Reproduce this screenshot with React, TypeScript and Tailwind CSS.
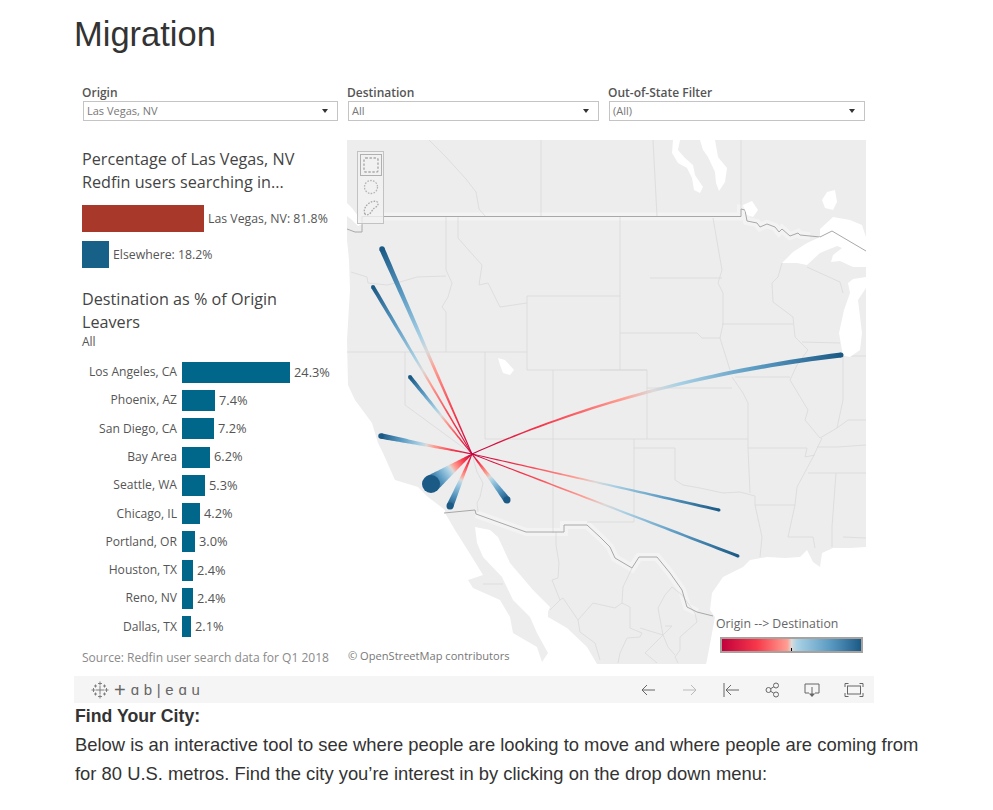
const tableauFont = "font-['Open_Sans',sans-serif]";

const destinations = [
  { name: "Los Angeles, CA", pct: "24.3%", width: 108 },
  { name: "Phoenix, AZ", pct: "7.4%", width: 33 },
  { name: "San Diego, CA", pct: "7.2%", width: 32 },
  { name: "Bay Area", pct: "6.2%", width: 28 },
  { name: "Seattle, WA", pct: "5.3%", width: 23 },
  { name: "Chicago, IL", pct: "4.2%", width: 18 },
  { name: "Portland, OR", pct: "3.0%", width: 13 },
  { name: "Houston, TX", pct: "2.4%", width: 11 },
  { name: "Reno, NV", pct: "2.4%", width: 11 },
  { name: "Dallas, TX", pct: "2.1%", width: 9 },
];

// Everything below is in page coordinates; the svg viewBox starts at the map's corner.
const LAND =
  "347,140 866,140 866,547 850,548 833,548 822,553 820,567 813,562 807,550 800,557 785,558 767,557 750,560 743,567 723,577 712,593 710,610 715,617 707,660 706,664 597,664 587,647 567,628 548,617 548,612 550,607 533,590 510,563 498,537 490,530 475,527 477,543 483,557 502,577 513,600 530,617 537,633 548,653 542,662 537,647 513,633 510,617 500,600 473,588 468,580 483,575 472,557 455,530 445,513 445,510 428,497 418,487 395,480 383,453 378,443 372,423 355,400 348,385 347,340 350,290 349,260 347,240";

const WATER = [
  "673,140 680,140 678,150 685,158 693,165 695,175 703,187 700,193 694,190 692,178 687,168 678,163 672,153",
  "700,140 715,140 718,157 727,168 725,182 719,191 716,183 715,172 708,157 703,150",
  "743,205 752,201 758,210 753,217 747,215",
  "827,192 835,190 837,202 833,210 825,208 822,200",
  "782,263 793,252 807,243 820,237 820,229 833,217 850,220 862,225 866,237 866,267 853,267 840,261 831,262 833,255 842,248 837,246 820,253 807,265 797,263",
  "848,283 853,279 866,277 866,288 858,300 862,333 860,350 850,357 843,356 839,333 844,310 850,293",
  "498,358 505,360 514,370 510,375 503,373 500,365",
  "347,203 352,208 358,216 362,224 358,226 352,220 347,216",
];

const STATE_LINES = [
  "429,140 445,156 466,179 476,192 479,209 486,217",
  "541,140 541,216",
  "653,140 657,216",
  "741,140 741,209",
  "446,217 446,270 452,283 448,297 442,307 446,312 446,352",
  "351,272 367,277 368,283 387,285 400,282 417,277 446,276",
  "347,352 527,352",
  "458,217 458,238 473,255 482,265 479,285 488,283 500,307 527,303",
  "527,296 620,296",
  "620,216 620,370",
  "527,296 527,370 647,370 647,439",
  "553,370 553,533",
  "485,352 485,439",
  "405,352 405,405 472,454 477,472 483,483 480,497 477,503 478,512",
  "485,439 748,439",
  "600,370 647,370",
  "647,388 732,388",
  "732,377 743,393 748,403 748,448",
  "634,439 634,522 587,522",
  "634,448 675,448 675,480 683,485 700,488 723,493 740,492 755,496 755,505",
  "748,448 750,493",
  "748,448 807,448 805,457 815,455",
  "755,505 795,505",
  "822,438 813,457 797,487 795,505 788,537 813,537 815,548",
  "836,473 832,527 832,547",
  "808,473 866,473",
  "817,447 837,447 866,445",
  "843,537 866,538",
  "755,505 762,537 760,557",
  "843,356 843,400 837,428 820,438",
  "837,428 848,420 866,420",
  "735,377 790,377",
  "782,263 778,277 772,283 773,302 793,317 795,337 808,350 797,365 790,380 808,410 805,420 820,438",
  "722,324 793,324",
  "713,218 718,247 722,270 718,283 723,293 723,324 720,338 730,370",
  "650,278 722,278",
  "620,333 697,333 702,338 720,338",
  "807,267 820,273 840,282 843,293",
  "802,342 840,343",
  "843,356 866,356",
  "556,532 556,545 559,563 558,578 552,580 560,600 550,610",
  "560,600 563,598 578,620 580,632 595,643 600,660",
  "578,620 593,603 615,608 622,603 630,607 630,628 642,633 640,637 627,638 620,653 618,663",
  "622,603 623,587 632,568",
  "640,628 663,635 645,653 657,663",
  "663,635 658,608 665,595 672,587 682,595 695,613 697,622 680,637 680,650 675,657 678,663",
  "665,626 672,626 663,635 668,647 675,655",
  "483,584 503,584",
];

const BORDER_HALOS = [
  "362,216.5 741,216.5 741,209 745,210 747,221 757,223 760,227 767,224 775,227 779,232 782,229 790,236 798,233 800,235 810,236",
  "476,514 526,532 564,532 564,525 587,525 600,537 610,547 615,558 632,568 639,557 657,557 670,573 682,590 687,607 697,612",
];

const BORDERS = [
  "347,229 355,232 362,232 362,223 362,216.5 741,216.5 741,209 745,210 747,221 757,223 760,227 767,224 775,227 779,232 782,229 790,236 798,233 800,235 810,236 820,237 832,231 866,251",
  "444,513 475,510 476,514 526,532 564,532 564,525 587,525 600,537 610,547 615,558 632,568 639,557 657,557 670,573 682,590 687,607 697,612 713,616",
];

const ORIGIN = { x: 472, y: 454 };

const ARCS = [
  { id: "seattle", x: 382, y: 249, w: 5.5 },
  { id: "portland", x: 373, y: 287, w: 4 },
  { id: "reno", x: 410, y: 377, w: 4 },
  { id: "bay", x: 381, y: 436, w: 5.5 },
  { id: "la", x: 431, y: 484, w: 18 },
  { id: "sandiego", x: 450, y: 506, w: 7 },
  { id: "phoenix", x: 507, y: 500, w: 7 },
  { id: "dallas", x: 719, y: 510, w: 3 },
  { id: "houston", x: 738, y: 556, w: 3 },
  { id: "chicago", x: 841, y: 355, w: 5, cx: 637, cy: 380 },
];

// Builds a ribbon that swells from the origin point to the destination.
function ribbon(x: number, y: number, w: number, cx?: number, cy?: number) {
  const c = { x: cx ?? (ORIGIN.x + x) / 2, y: cy ?? (ORIGIN.y + y) / 2 };
  const left: string[] = [];
  const right: string[] = [];
  for (let i = 0; i <= 40; i++) {
    const t = i / 40;
    const px = (1 - t) * (1 - t) * ORIGIN.x + 2 * t * (1 - t) * c.x + t * t * x;
    const py = (1 - t) * (1 - t) * ORIGIN.y + 2 * t * (1 - t) * c.y + t * t * y;
    const dx = 2 * (1 - t) * (c.x - ORIGIN.x) + 2 * t * (x - c.x);
    const dy = 2 * (1 - t) * (c.y - ORIGIN.y) + 2 * t * (y - c.y);
    const len = Math.hypot(dx, dy);
    const half = (0.9 + (w - 0.9) * t) / 2;
    left.push(`${px - (dy / len) * half},${py + (dx / len) * half}`);
    right.unshift(`${px + (dy / len) * half},${py - (dx / len) * half}`);
  }
  return `M${left.join(" L")} L${right.join(" L")} Z`;
}

function Filter({ label, value, className }: { label: string; value: string; className: string }) {
  return (
    <div className={className}>
      <div className="h-[16px] text-[12px] leading-[16px] font-semibold text-[#555]">{label}</div>
      <div className="ml-px flex h-[20px] items-center justify-between border border-[#c4c4c4] bg-white pl-[3px] pr-[8px]">
        <span className="pb-px text-[11px] leading-none text-[#777]">{value}</span>
        <span className="mr-px h-0 w-0 border-x-[3.5px] border-t-[4px] border-x-transparent border-t-[#333]" />
      </div>
    </div>
  );
}

function SelectionTools() {
  return (
    <div className="absolute left-[10px] top-[11px] flex h-[73px] w-[27px] flex-col items-center border border-[#c2c2c2] bg-[#f1f1f1]/80 pt-[2px]">
      <div className="flex h-[22px] w-[22px] items-center justify-center border border-[#b0b0b0]">
        <svg width="18" height="18" viewBox="0 0 18 18" fill="none" stroke="#a8a8a8" strokeWidth="1.4" strokeDasharray="2.4 1.6">
          <rect x="2" y="2" width="14" height="14" rx="1.5" />
        </svg>
      </div>
      <svg className="mt-[2px]" width="18" height="18" viewBox="0 0 18 18" fill="none" stroke="#b4b4b4" strokeWidth="1.3" strokeDasharray="1.6 1.3">
        <circle cx="9" cy="9" r="6.5" />
      </svg>
      <svg className="mt-[3px]" width="18" height="18" viewBox="0 0 18 18" fill="none" stroke="#a8a8a8" strokeWidth="1.3" strokeDasharray="1.6 1.3">
        <path d="M3 15c-1.5-2.5-.5-6 1.5-8.5C7 3.5 11 1.5 14.5 2.5c2.5 1 1.8 4-.5 5.5-2 1.3-3 2-4.5 4.5-1.3 2.5-4.5 4.5-6.5 2.5z" />
      </svg>
    </div>
  );
}

function USMap() {
  return (
    <svg className="absolute inset-0" width="519" height="524" viewBox="347 140 519 524">
      <defs>
        {ARCS.map((a) => (
          <linearGradient key={a.id} id={`grad-${a.id}`} gradientUnits="userSpaceOnUse" x1={ORIGIN.x} y1={ORIGIN.y} x2={a.x} y2={a.y}>
            <stop offset="0" stopColor="#c2003d" />
            <stop offset="0.2" stopColor="#f7384a" />
            <stop offset="0.42" stopColor="#ff9e92" />
            <stop offset="0.5" stopColor="#dcd9d8" />
            <stop offset="0.57" stopColor="#a9d1e5" />
            <stop offset="0.78" stopColor="#5a9ac2" />
            <stop offset="1" stopColor="#1c5a86" />
          </linearGradient>
        ))}
      </defs>
      <polygon points={LAND} fill="#ededed" />
      {BORDER_HALOS.map((p) => (
        <polyline key={p} points={p} fill="none" stroke="#f3f3f3" strokeWidth="8" />
      ))}
      {STATE_LINES.map((p) => (
        <polyline key={p} points={p} fill="none" stroke="#d9d9d9" strokeWidth="0.8" />
      ))}
      {BORDERS.map((p) => (
        <polyline key={p} points={p} fill="none" stroke="#a8a8a8" strokeWidth="1" />
      ))}
      {WATER.map((p) => (
        <polygon key={p} points={p} fill="#ffffff" />
      ))}
      <polyline points="820,237 832,231 866,251" fill="none" stroke="#a8a8a8" strokeWidth="1" />
      {ARCS.map((a) => (
        <g key={a.id}>
          <path d={ribbon(a.x, a.y, a.w, a.cx, a.cy)} fill={`url(#grad-${a.id})`} />
          <circle cx={a.x} cy={a.y} r={a.w / 2} fill="#1c5a86" />
        </g>
      ))}
    </svg>
  );
}

function TableauMark() {
  const bars: [number, number, number][] = [
    [9, 9, 4],
    [9, 2.5, 2],
    [9, 15.5, 2],
    [2.5, 9, 2],
    [15.5, 9, 2],
    [4.5, 5, 1.5],
    [13.5, 5, 1.5],
    [4.5, 13, 1.5],
    [13.5, 13, 1.5],
  ];
  return (
    <svg width="18" height="18" viewBox="0 0 18 18" stroke="#777" strokeWidth="0.9">
      {bars.map(([x, y, r]) => (
        <path key={`${x}-${y}`} d={`M${x - r} ${y}H${x + r}M${x} ${y - r}V${y + r}`} />
      ))}
    </svg>
  );
}

function ToolbarIcon({ className, stroke = "#666", children }: { className: string; stroke?: string; children: React.ReactNode }) {
  return (
    <svg className={className} width="20" height="18" viewBox="0 0 20 18" fill="none" stroke={stroke} strokeWidth="1">
      {children}
    </svg>
  );
}

function TableauBar() {
  return (
    <div className="flex h-[27px] items-center bg-[#f5f5f5]">
      <div className="ml-[17px] flex items-center">
        <TableauMark />
        <span className="ml-[5px] flex items-center font-['Liberation_Sans',sans-serif] leading-none text-[#666]">
          <span className="mr-[5px] text-[20px]">+</span>
          <span className="text-[15px] tracking-[4.7px]">ɑb|eɑu</span>
        </span>
      </div>
      <div className="ml-auto mr-[10px] flex items-center">
        <ToolbarIcon className="mr-[22px]">
          <path d="M17 9H4M9 4 4 9l5 5" />
        </ToolbarIcon>
        <ToolbarIcon className="mr-[21px]" stroke="#bbb">
          <path d="M3 9h13M11 4l5 5-5 5" />
        </ToolbarIcon>
        <ToolbarIcon className="mr-[22px]">
          <path d="M3 2v14M18 9H5M10 4 5 9l5 5" />
        </ToolbarIcon>
        <ToolbarIcon className="mr-[19px]">
          <circle cx="5.5" cy="9" r="2.5" />
          <circle cx="13" cy="4.5" r="2.5" />
          <circle cx="13" cy="13.5" r="2.5" />
          <path d="m7.7 7.7 3.1-1.9M7.7 10.3l3.1 1.9" />
        </ToolbarIcon>
        <ToolbarIcon className="mr-[22px]">
          <path d="M7 12H3V3h14v9h-4M10 6v8" />
          <path d="M6.8 12.5h6.4L10 16z" fill="#666" stroke="none" />
        </ToolbarIcon>
        <ToolbarIcon className="">
          <path d="M1 6V2.5h3.5M15.5 2.5H19V6M1 12v3.5h3.5M15.5 15.5H19V12" />
          <rect x="3.5" y="5" width="13" height="8" />
        </ToolbarIcon>
      </div>
    </div>
  );
}

export default function App() {
  return (
    <div className="h-[810px] w-[993px] overflow-hidden bg-white font-['Liberation_Sans',sans-serif] text-[#333]">
      <div className="pl-[75px]">
        <h1 className="-ml-px h-[85px] pt-[14px] text-[34.5px] leading-[40px] text-[#333]">Migration</h1>
      </div>

      <div className={`ml-[74px] w-[800px] ${tableauFont}`}>
        <div className="flex pl-[8px]">
          <Filter className="w-[256px]" label="Origin" value="Las Vegas, NV" />
          <Filter className="ml-[9px] w-[252px]" label="Destination" value="All" />
          <Filter className="ml-[9px] w-[257px]" label="Out-of-State Filter" value="(All)" />
        </div>

        <div className="mt-[19px] flex h-[524px]">
          <div className="w-[273px] pl-[8px]">
            <h2 className="mt-[8px] text-[16.2px] leading-[23px] text-[#444]">
              Percentage of Las Vegas, NV
              <br />
              Redfin users searching in...
            </h2>
            <div className="mt-[11px] flex h-[27px] items-center">
              <div className="h-full w-[122px] bg-[#a8392a]" />
              <span className="ml-[4px] pt-[2px] text-[12.3px] text-[#555]">Las Vegas, NV: 81.8%</span>
            </div>
            <div className="mt-[9px] flex h-[27px] items-center">
              <div className="h-full w-[27px] bg-[#176087]" />
              <span className="ml-[4px] pt-[2px] text-[12.3px] text-[#555]">Elsewhere: 18.2%</span>
            </div>

            <h2 className="mt-[20px] w-[230px] text-[16.2px] leading-[23px] text-[#444]">Destination as % of Origin Leavers</h2>
            <div className="text-[12px] leading-[15px] text-[#555]">All</div>

            <div className="mt-[9px]">
              {destinations.map((d) => (
                <div key={d.name} className="flex h-[28.3px] items-center">
                  <div className="w-[95px] text-right text-[12.1px] text-[#555]">{d.name}</div>
                  <div className="ml-[5px] h-[21px] bg-[#00668a]" style={{ width: d.width }} />
                  <div className="ml-[4px] text-[12.8px] text-[#555]">{d.pct}</div>
                </div>
              ))}
            </div>
            <div className="mt-[9px] text-[12.05px] leading-[16px] text-[#8a8a8a]">Source: Redfin user search data for Q1 2018</div>
          </div>

          <div className="relative h-[524px] w-[519px]">
            <USMap />
            <SelectionTools />
            <div className="absolute bottom-[1px] left-[1px] text-[11.1px] leading-[14px] text-[#777]">© OpenStreetMap contributors</div>
            <div className="absolute left-[369px] top-[476px] w-[150px]">
              <div className="text-[12.3px] leading-[16px] text-[#666]">Origin --&gt; Destination</div>
              <div className="relative ml-[4px] mt-[5px] h-[16px] w-[143px] border-2 border-[#a8a29e] bg-[linear-gradient(to_right,#c2003d,#f7384a_25%,#ff9e92_47%,#dcd9d8_50%,#a9d1e5_54%,#5a9ac2_78%,#1c5a86)]">
                <div className="absolute bottom-0 left-[69px] h-[3px] w-px bg-black" />
              </div>
            </div>
          </div>
        </div>

        <div className="mt-[12px]">
          <TableauBar />
        </div>
      </div>

      <div className="w-[925px] pl-[75px]">
        <p className="text-[17.7px] leading-[26px] font-bold text-[#333]">Find Your City:</p>
        <p className="mt-[1px] text-[18.4px] leading-[29px] text-[#333]">
          Below is an interactive tool to see where people are looking to move and where people are coming from for 80 U.S. metros. Find the city you’re interest in by clicking on the drop down menu:
        </p>
      </div>
    </div>
  );
}
